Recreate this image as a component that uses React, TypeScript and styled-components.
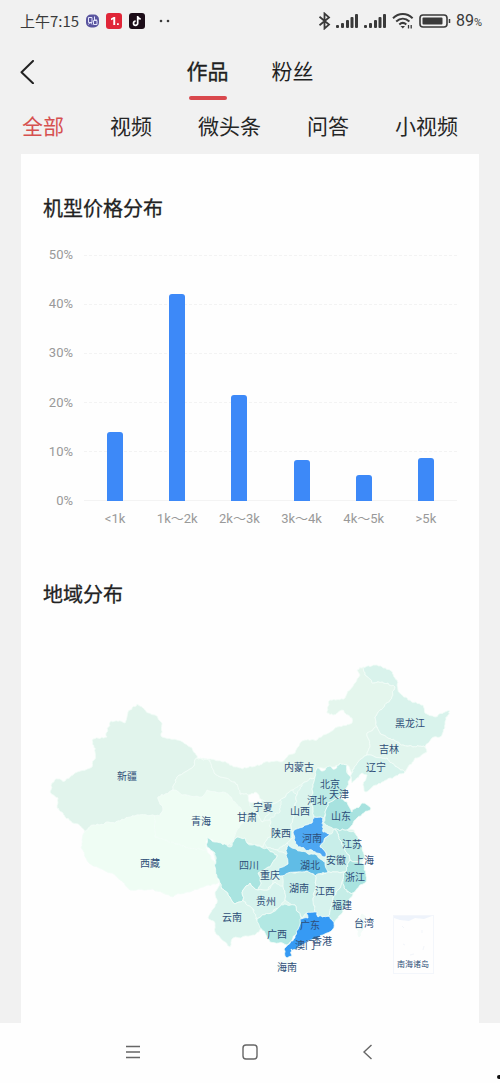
import React from 'react';
import styled, { createGlobalStyle } from 'styled-components';

const GlobalStyle = createGlobalStyle`
  * { box-sizing: border-box; }
  body {
    margin: 0;
    background: #f1f1f1;
    color: #1f1f1f;
    font-family: 'Noto Sans CJK SC', 'Noto Sans', sans-serif;
  }
  button { font: inherit; color: inherit; background: none; border: 0; padding: 0; margin: 0; cursor: pointer; }
  h2 { margin: 0; }
`;

const Screen = styled.div`
  display: flex;
  flex-direction: column;
  min-height: 100vh;
`;

const StatusBar = styled.div`
  display: flex;
  align-items: center;
  justify-content: space-between;
  height: 42px;
  padding: 0 18px 0 20px;
  color: #3a3a3a;
  font-size: 15px;
  line-height: 20px;
`;

const StatusGroup = styled.div<{ $gap: number }>`
  display: flex;
  align-items: center;
  gap: ${(p) => p.$gap}px;
`;

const Charge = styled.span`
  display: flex;
  align-items: baseline;
  padding-top: 2px;
  font-family: Roboto, sans-serif;
  font-size: 16px;
  small { font-size: 11px; }
`;

const TopBar = styled.header`
  display: grid;
  grid-template-columns: 1fr auto 1fr;
  align-items: start;
  padding: 12px 20px 0;
`;

const BackButton = styled.button`
  display: flex;
  justify-self: start;
  align-items: center;
  height: 36px;
`;

const MainTabs = styled.nav`
  display: flex;
  gap: 43px;
`;

const MainTab = styled.button<{ $active?: boolean }>`
  display: flex;
  flex-direction: column;
  align-items: center;
  gap: 10px;
  font-size: 21px;
  line-height: 32px;
  -webkit-text-stroke: ${(p) => (p.$active ? '0.3px' : '0')};
  &::after {
    content: '';
    width: 38px;
    height: 4px;
    border-radius: 2px;
    background: ${(p) => (p.$active ? '#d9484d' : 'transparent')};
  }
`;

const Categories = styled.nav`
  display: flex;
  gap: 46px;
  padding: 10px 22px 13px;
  white-space: nowrap;
`;

const Category = styled.button<{ $active?: boolean }>`
  font-size: 21px;
  line-height: 31px;
  color: ${(p) => (p.$active ? '#d6504f' : '#262626')};
`;

const Card = styled.main`
  flex: 1;
  margin: 0 21px;
  padding: 40px 22px 23px;
  background: #fefefe;
`;

const Title = styled.h2`
  font-size: 20px;
  line-height: 28px;
  font-weight: 400;
  -webkit-text-stroke: 0.3px;
  color: #222;
`;

const Chart = styled.section`
  display: grid;
  grid-template-columns: 30px 1fr;
  column-gap: 11px;
  margin: 24px 0 52px;
  font-family: Roboto, 'Noto Sans CJK SC', sans-serif;
  font-size: 13px;
  line-height: 18px;
  color: #999;
`;

const YAxis = styled.div`
  grid-row: 1;
  display: flex;
  flex-direction: column;
  justify-content: space-between;
  text-align: right;
`;

const Plot = styled.div`
  display: grid;
  height: 246px;
  margin: 9px 0;
`;

const GridLines = styled.div`
  grid-area: 1 / 1;
  display: flex;
  flex-direction: column;
  justify-content: space-between;
`;

const GridLine = styled.div<{ $solid?: boolean }>`
  border-top: 1px ${(p) => (p.$solid ? 'solid' : 'dashed')} #f3f3f3;
`;

const Columns = styled.div`
  grid-area: 1 / 1;
  display: grid;
  grid-template-columns: repeat(6, 1fr);
  align-items: end;
  justify-items: center;
`;

const Bar = styled.div`
  width: 16px;
  border-radius: 3px 3px 0 0;
  background: #3d89f8;
`;

const XAxis = styled.div`
  grid-column: 2;
  display: grid;
  grid-template-columns: repeat(6, 1fr);
  text-align: center;
  white-space: nowrap;
`;

const MapDrawing = styled.svg`
  display: block;
  width: 100%;
  margin-top: 32px;
  font-size: 10px;
  text-anchor: middle;
  fill: #2e4e78;
`;

const SystemNav = styled.nav`
  position: relative;
  display: flex;
  align-items: center;
  justify-content: center;
  gap: 93px;
  height: 60px;
  padding-bottom: 3px;
  background: #fefefe;
  &::after {
    content: '';
    position: absolute;
    right: 0;
    bottom: 4px;
    width: 3px;
    height: 4px;
    border-radius: 2px 0 0 2px;
    background: #111;
  }
`;

const NavButton = styled.button`
  display: flex;
  justify-content: center;
  width: 24px;
`;

const prices = [
  { label: '<1k', value: 14.1 },
  { label: '1k～2k', value: 42.1 },
  { label: '2k～3k', value: 21.6 },
  { label: '3k～4k', value: 8.3 },
  { label: '4k～5k', value: 5.3 },
  { label: '>5k', value: 8.7 },
];

type Province = { fill: string; border: string };

const provinces: Province[] = [
  { fill: '#e0f6ef', border: '225,800 270,803 317,772 347,770 345,785 330,826 354,830 364,858 352,893 330,924 300,935 257,920 225,890 213,850' },
  { fill: '#e1f4ec', border: '93,739 107,737 106,733 111,721 125,723 128,712 137,704 145,710 155,715 162,723 162,737 177,740 190,747 197,758 193,767 177,777 173,790 158,797 163,808 160,816 137,815 120,821 105,823 90,827 85,832 78,824 65,817 57,808 58,798 50,792 52,783 58,779 65,781 73,775 92,767 95,752' },
  { fill: '#effdf4', border: '85,832 90,827 105,823 120,821 137,815 155,816 155,837 173,842 190,848 207,850 215,863 218,877 218,883 208,885 187,892 173,897 153,889 130,890 112,873 88,862 81,847 82,840' },
  { fill: '#effdf4', border: '160,816 163,808 158,797 173,790 182,795 202,797 207,790 223,792 235,802 240,807 245,820 237,830 235,840 227,846 213,840 207,837 207,850 190,848 173,842 155,837 155,816' },
  { fill: '#e5f7ee', border: '173,790 177,777 193,767 197,758 210,760 215,774 226,778 235,782 240,794 248,795 250,806 257,812 262,822 270,820 272,835 265,842 263,847 247,843 245,838 237,837 230,845 235,835 237,830 245,820 240,807 235,802 223,792 207,790 202,797 182,795' },
  { fill: '#e4f6ed', border: '197,758 223,762 237,767 252,767 263,763 280,762 295,753 300,743 305,740 317,740 335,728 352,723 352,718 342,710 333,715 327,713 330,700 345,698 355,683 360,675 357,670 363,667 365,675 372,683 388,683 395,687 390,700 380,710 375,717 377,727 367,733 370,747 367,755 358,762 352,773 347,765 340,763 335,767 317,768 315,777 303,783 293,790 280,800 270,805 262,800 255,792 248,795 240,794 235,782 226,778 215,774 210,760' },
  { fill: '#d9f3ec', border: '363,667 377,665 390,670 397,680 398,690 408,700 423,705 425,713 435,717 450,711 445,722 440,737 432,738 425,747 413,747 403,745 397,742 383,735 377,727 375,717 380,710 390,700 395,687 388,683 372,683 365,675' },
  { fill: '#e1f5ed', border: '367,733 377,727 383,735 397,742 403,745 413,747 425,747 427,752 417,758 408,767 405,772 397,767 387,758 375,757 367,755 370,747' },
  { fill: '#d7f3ec', border: '352,773 358,762 367,755 375,757 387,758 397,767 405,772 390,778 377,785 365,792 363,785 367,775 362,773 352,783' },
  { fill: '#dff5ed', border: '262,800 270,805 268,815 262,822 257,812' },
  { fill: '#daf4ed', border: '293,790 280,800 280,812 270,820 272,835 265,842 267,848 277,850 287,843 293,838 293,832 291,826 293,812 297,795' },
  { fill: '#daf4ed', border: '315,777 303,783 297,795 293,812 291,826 293,832 303,827 312,823 314,817 312,803 313,787' },
  { fill: '#bdebe5', border: '317,768 323,771 330,766 335,769 340,763 347,765 347,773 351,777 347,787 338,798 328,803 325,812 323,818 314,817 312,803 313,787 315,777' },
  { fill: '#a7e2df', border: '325,812 328,803 338,798 347,802 352,812 362,803 371,808 357,818 347,830 335,829 323,823' },
  { fill: '#d8f4ed', border: '267,848 277,850 287,855 288,864 280,868 282,875 273,880 268,890 258,890 261,883 258,873 268,867 277,855' },
  { fill: '#a9e4e0', border: '207,837 215,842 230,847 237,837 245,838 247,843 267,848 277,855 268,867 258,873 261,883 258,890 250,883 243,890 243,900 235,904 228,895 220,883 215,867 215,853 207,847' },
  { fill: '#bdebe5', border: '335,829 347,830 355,833 362,847 365,858 355,862 350,860 345,848 340,840' },
  { fill: '#c8eee9', border: '330,834 335,829 340,840 345,848 350,860 345,872 335,872 327,872 325,863 326,853 320,847 324,840' },
  { fill: '#daf4ed', border: '220,883 228,895 235,904 243,900 247,905 252,908 257,920 263,928 253,935 233,938 230,947 222,940 215,932 215,923 208,918 217,903 215,892' },
  { fill: '#d6f3ed', border: '243,900 243,890 250,883 258,890 268,890 275,882 283,886 285,900 280,907 273,912 257,919 252,908 247,905' },
  { fill: '#c9eee9', border: '282,875 288,872 307,871 315,875 316,885 313,900 317,913 307,913 301,918 298,912 295,905 285,900 283,886' },
  { fill: '#d6f2ed', border: '315,875 327,872 335,872 345,872 343,880 338,890 333,902 328,916 318,917 313,900 316,885' },
  { fill: '#a9e3df', border: '345,872 350,860 355,862 363,864 366,876 365,883 360,885 353,893 347,892 343,880' },
  { fill: '#c5ede7', border: '343,880 347,892 353,893 345,908 338,918 331,925 328,916 333,902 338,890' },
  { fill: '#b2e8e3', border: '257,919 273,912 283,905 295,905 298,912 301,920 300,927 293,938 287,945 270,942 265,933 260,928' },
  { fill: '#60bce6', border: '287,843 292,848 300,851 315,854 325,862 328,872 315,876 307,871 297,872 288,873 280,876 279,868 288,864 286,855' },
  { fill: '#4da7f2', border: '293,832 303,827 312,823 314,817 323,818 323,832 330,834 324,840 320,847 326,853 325,857 312,850 298,847 294,840' },
  { fill: '#369af4', border: '299,927 300,919 308,918 306,913 317,912 318,917 330,917 334,922 333,929 323,935 314,939 304,944 297,948 291,949 292,956 287,958 284,949 291,941 295,936' },
  { fill: '#f3fbf9', border: '362,914 366,917 363,930 359,937 357,926' },
  { fill: '#f3fbf9', border: '281,960 291,960 289,969 282,972 277,967' },
];

const places: [string, number, number][] = [
  ['新疆', 127, 776], ['西藏', 150, 863], ['青海', 201, 821], ['甘肃', 247, 817],
  ['宁夏', 263, 807], ['内蒙古', 299, 767], ['黑龙江', 410, 723], ['吉林', 389, 749],
  ['辽宁', 376, 767], ['北京', 330, 784], ['天津', 339, 794], ['河北', 317, 800],
  ['山西', 300, 811], ['山东', 341, 816], ['陕西', 281, 833], ['河南', 312, 838],
  ['江苏', 352, 844], ['安徽', 336, 860], ['上海', 364, 860], ['湖北', 310, 865],
  ['重庆', 270, 875], ['四川', 249, 865], ['浙江', 355, 877], ['湖南', 299, 888],
  ['江西', 325, 891], ['贵州', 266, 901], ['福建', 342, 905], ['云南', 232, 917],
  ['广西', 277, 934], ['广东', 310, 925], ['澳门', 305, 945], ['香港', 322, 941],
  ['台湾', 364, 923], ['海南', 287, 967],
];

type Point = [number, number];

// Splits a border segment into small irregular steps. The offset depends only on
// the unordered end points, so two neighbours share the same ragged border.
function ragged(a: Point, b: Point, depth: number): Point[] {
  const dx = b[0] - a[0];
  const dy = b[1] - a[1];
  const length = Math.hypot(dx, dy);
  if (depth === 0 || length < 3) return [a];
  const forward = a[0] < b[0] || (a[0] === b[0] && a[1] < b[1]);
  const seed = Math.sin((a[0] + b[0]) * 12.98 + (a[1] + b[1]) * 78.23) * 43758.5;
  const offset = (((seed - Math.floor(seed) - 0.5) * 2) / length) * (forward ? 1 : -1);
  const middle: Point = [(a[0] + b[0]) / 2 - dy * offset, (a[1] + b[1]) / 2 + dx * offset];
  return [...ragged(a, middle, depth - 1), ...ragged(middle, b, depth - 1)];
}

function outline(border: string): string {
  const points = border.split(' ').map((p) => p.split(',').map(Number) as Point);
  const all = points.flatMap((p, i) => ragged(p, points[(i + 1) % points.length], 3));
  return `M${all.map(([x, y]) => `${x.toFixed(1)} ${y.toFixed(1)}`).join('L')}Z`;
}

const Signal = () => (
  <svg width="23" height="15" viewBox="0 0 23 15" fill="#3a3a3a" aria-hidden="true">
    <rect x="0" y="11" width="3" height="3" rx="1" />
    <rect x="5" y="9" width="3" height="5" rx="1" />
    <rect x="10" y="6" width="3" height="8" rx="1" />
    <rect x="14.500" y="3" width="3" height="11" rx="1" />
    <rect x="19" y="0" width="3" height="14" rx="1" />
  </svg>
);

export default function App() {
  return (
    <Screen>
      <GlobalStyle />
      <StatusBar>
        <StatusGroup $gap={7}>
          <span>上午7:15</span>
          <svg width="13" height="14" viewBox="0 0 13 14" aria-hidden="true">
            <rect width="13" height="13" y=".5" rx="5" fill="#5a559f" />
            <path d="M2.500 3.500h3.500v5H2.500zM2.500 10.500l1.500-2M6 10.500 4.800 9M8.500 2.500v3.500h2.500M7.500 6.500h3.500v4H7.500z" fill="none" stroke="#e4e6fb" strokeWidth="1" />
          </svg>
          <svg width="16" height="16" viewBox="0 0 16 16" aria-hidden="true">
            <rect width="16" height="16" rx="3" fill="#e02638" />
            <path d="M5 5.500 7.700 4h1.500v8H7.300V6.300L5 7.200zM11 10.300h1.800V12H11z" fill="#fff" />
          </svg>
          <svg width="16" height="16" viewBox="0 0 16 16" aria-hidden="true">
            <rect width="16" height="16" rx="3" fill="#1c0d18" />
            <path d="M8.700 3v7.200a2.100 2.100 0 1 1-2.100-2.100M8.700 3c.2 1.900 1.500 2.900 3.100 3" fill="none" stroke="#fff" strokeWidth="1.700" />
          </svg>
          <svg width="22" height="4" viewBox="0 0 22 4" fill="#3a3a3a" aria-hidden="true">
            <circle cx="9" cy="2" r="1.300" />
            <circle cx="16" cy="2" r="1.300" />
          </svg>
        </StatusGroup>
        <StatusGroup $gap={5}>
          <svg width="13" height="18" viewBox="0 0 13 18" fill="none" stroke="#3a3a3a" strokeWidth="1.800" aria-hidden="true">
            <path d="M1.500 4.800 11 12.600 6.500 16.500V1.500L11 5.400 1.500 13.200" />
          </svg>
          <Signal />
          <Signal />
          <svg width="22" height="18" viewBox="0 0 22 18" fill="none" stroke="#3a3a3a" strokeWidth="2" aria-hidden="true">
            <path d="M1 6.200C6.800.700 14.800.700 20.600 6.200M4.200 9.400c4-3.700 9.200-3.700 13.200 0M7.300 12.500c2.200-2 4.800-2 7 0" />
            <path d="m8.500 14 2.300 2.500L13 14Z" fill="#3a3a3a" stroke="none" />
            <path d="M16.500 16.500v-3.500M19.200 13v3.500" strokeWidth="1.300" />
          </svg>
          <svg width="32" height="14" viewBox="0 0 32 14" aria-hidden="true">
            <rect x="1" y="1" width="27" height="12" rx="3" fill="none" stroke="#3a3a3a" strokeWidth="1.600" />
            <rect x="3.500" y="3.500" width="20" height="7" rx="1" fill="#3a3a3a" />
            <path d="M30.500 5v4" stroke="#3a3a3a" strokeWidth="1.500" />
          </svg>
          <Charge>89<small>%</small></Charge>
        </StatusGroup>
      </StatusBar>

      <TopBar>
        <BackButton aria-label="返回">
          <svg width="16" height="24" viewBox="0 0 16 24" fill="none" stroke="#222" strokeWidth="2" strokeLinecap="round" strokeLinejoin="round" aria-hidden="true">
            <path d="M13 1 1.500 12.200 13 23.200" />
          </svg>
        </BackButton>
        <MainTabs>
          <MainTab $active>作品</MainTab>
          <MainTab>粉丝</MainTab>
        </MainTabs>
      </TopBar>

      <Categories>
        <Category $active>全部</Category>
        <Category>视频</Category>
        <Category>微头条</Category>
        <Category>问答</Category>
        <Category>小视频</Category>
      </Categories>

      <Card>
        <Title>机型价格分布</Title>
        <Chart>
          <YAxis>
            {[50, 40, 30, 20, 10, 0].map((v) => <span key={v}>{v}%</span>)}
          </YAxis>
          <Plot>
            <GridLines>
              {[50, 40, 30, 20, 10, 0].map((v) => <GridLine key={v} $solid={v === 0} />)}
            </GridLines>
            <Columns>
              {prices.map((p) => <Bar key={p.label} style={{ height: `${p.value * 2}%` }} />)}
            </Columns>
          </Plot>
          <XAxis>
            {prices.map((p) => <span key={p.label}>{p.label}</span>)}
          </XAxis>
        </Chart>

        <Title>地域分布</Title>
        <MapDrawing viewBox="43 640 414 360" role="img" aria-label="地域分布">
          <g stroke="#f3fcf8" strokeWidth="0.800" strokeLinejoin="round">
            {provinces.map((p) => <path key={p.border} d={outline(p.border)} fill={p.fill} />)}
          </g>
          <g>
            <rect x="393.500" y="915.500" width="40" height="58" fill="none" stroke="#f3f6fb" />
            <path d="M394 916h38l-8 3-9-1-6 3-9-1-6-2z" fill="#eef3fb" />
            <path d="M402 926l2 2M422 930v3M403 944l2 1M424 946l-1 4M410 955l4-1" stroke="#f2f5fa" />
          </g>
          {places.map(([name, x, y]) => <text key={name} x={x} y={y + 4}>{name}</text>)}
          <text x="413" y="967" fontSize="8">南海诸岛</text>
        </MapDrawing>
      </Card>

      <SystemNav>
        <NavButton aria-label="菜单">
          <svg width="16" height="16" viewBox="0 0 16 16" stroke="#666" strokeWidth="1.300" aria-hidden="true">
            <path d="M1 2.500h14M1 8h14M1 13.500h14" />
          </svg>
        </NavButton>
        <NavButton aria-label="主页">
          <svg width="16" height="16" viewBox="0 0 16 16" fill="none" stroke="#666" strokeWidth="1.400" aria-hidden="true">
            <rect x="1" y="1" width="14" height="14" rx="3" />
          </svg>
        </NavButton>
        <NavButton aria-label="后退">
          <svg width="16" height="16" viewBox="0 0 16 16" fill="none" stroke="#666" strokeWidth="1.400" aria-hidden="true">
            <path d="M12.500 1 5 8l7.500 7" />
          </svg>
        </NavButton>
      </SystemNav>
    </Screen>
  );
}
